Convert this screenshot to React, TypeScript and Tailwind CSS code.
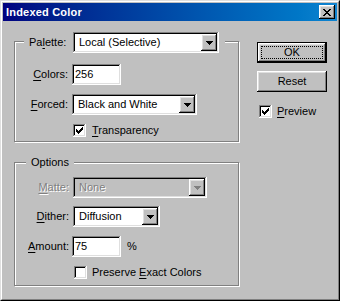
import React from "react";

const raised =
  "shadow-[inset_-1px_-1px_0_#000,inset_1px_1px_0_#fff,inset_-2px_-2px_0_#808080,inset_2px_2px_0_#dfdfdf]";
const sunken =
  "shadow-[inset_-1px_-1px_0_#fff,inset_1px_1px_0_#808080,inset_-2px_-2px_0_#dfdfdf,inset_2px_2px_0_#000]";
const etched = "border border-[#808080] shadow-[inset_1px_1px_0_#fff,1px_1px_0_#fff]";

function U({ children }: { children: React.ReactNode }) {
  return <span className="underline decoration-1 underline-offset-[2px]">{children}</span>;
}

function Arrow({ color = "#000" }: { color?: string }) {
  return (
    <svg width="7" height="4" viewBox="0 0 7 4" shapeRendering="crispEdges">
      <rect x="0" y="0" width="7" height="1" fill={color} />
      <rect x="1" y="1" width="5" height="1" fill={color} />
      <rect x="2" y="2" width="3" height="1" fill={color} />
      <rect x="3" y="3" width="1" height="1" fill={color} />
    </svg>
  );
}

function Combo({
  text,
  width,
  disabled = false,
}: {
  text: string;
  width: string;
  disabled?: boolean;
}) {
  return (
    <div
      className={`${width} h-[21px] flex items-center p-[2px] ${sunken} ${
        disabled ? "bg-[#c0c0c0]" : "bg-white"
      }`}
    >
      <div
        className={`flex-1 pl-[4px] leading-none ${
          disabled ? "text-[#808080] [text-shadow:1px_1px_0_#fff]" : "text-black"
        }`}
      >
        {text}
      </div>
      <div className={`w-[16px] h-[17px] bg-[#c0c0c0] flex items-center justify-center ${raised}`}>
        <div className="mt-[1px]">
          {disabled ? <Arrow color="#808080" /> : <Arrow />}
        </div>
      </div>
    </div>
  );
}

function Check({ checked }: { checked: boolean }) {
  return (
    <div className={`w-[13px] h-[13px] bg-white flex items-center justify-center ${sunken}`}>
      {checked && (
        <svg width="7" height="7" viewBox="0 0 7 7" shapeRendering="crispEdges">
          <rect x="6" y="0" width="1" height="1" fill="#000" />
          <rect x="5" y="1" width="2" height="1" fill="#000" />
          <rect x="0" y="2" width="1" height="1" fill="#000" />
          <rect x="4" y="2" width="3" height="1" fill="#000" />
          <rect x="0" y="3" width="2" height="1" fill="#000" />
          <rect x="3" y="3" width="3" height="1" fill="#000" />
          <rect x="0" y="4" width="5" height="1" fill="#000" />
          <rect x="1" y="5" width="3" height="1" fill="#000" />
          <rect x="2" y="6" width="1" height="1" fill="#000" />
        </svg>
      )}
    </div>
  );
}

function CloseGlyph() {
  const rows: [number, number, number][] = [
    [0, 0, 2], [0, 6, 2],
    [1, 1, 2], [1, 5, 2],
    [2, 2, 4],
    [3, 3, 2],
    [4, 2, 4],
    [5, 1, 2], [5, 5, 2],
    [6, 0, 2], [6, 6, 2],
  ];
  return (
    <svg width="8" height="7" viewBox="0 0 8 7" shapeRendering="crispEdges">
      {rows.map(([y, x, w], i) => (
        <rect key={i} x={x} y={y} width={w} height="1" fill="#000" />
      ))}
    </svg>
  );
}

export default function App() {
  return (
    <div
      className="w-[340px] h-[301px] bg-[#c0c0c0] border border-[#dfdfdf] border-r-black border-b-black text-[11px] text-black"
      style={{ fontFamily: '"Liberation Sans", Arial, sans-serif' }}
    >
      <div className="w-full h-full border border-white border-r-[#808080] border-b-[#808080] p-[1px] flex flex-col">
        {/* Title bar */}
        <div className="h-[18px] flex items-center bg-linear-to-r from-[#000080] to-[#1084d0] pl-[3px] pr-[2px]">
          <div className="flex-1 text-white font-bold text-[11px] leading-none tracking-[0.2px]">
            Indexed Color
          </div>
          <div className={`w-[16px] h-[14px] bg-[#c0c0c0] flex items-center justify-center ${raised}`}>
            <CloseGlyph />
          </div>
        </div>

        {/* Body */}
        <div className="flex flex-row pl-[11px]">
          {/* Left column */}
          <div className="w-[226px] pt-[20px] flex flex-col">
            {/* Palette group */}
            <div className={`w-[225px] ${etched} flex flex-col pb-[4px]`}>
              <div className="-mt-[10px] ml-[9px] self-start flex items-center bg-[#c0c0c0] pl-[5px] pr-[6px] h-[21px]">
                <span className="w-[44px] leading-none">
                  Pa<U>l</U>ette:
                </span>
                <Combo text="Local (Selective)" width="w-[146px]" />
              </div>
              <div className="mt-[11px] flex items-center h-[21px]">
                <div className="w-[53px] text-right leading-none">
                  <U>C</U>olors:
                </div>
                <div className={`ml-[4px] w-[49px] h-[21px] bg-white pl-[3px] flex items-center leading-none ${sunken}`}>
                  256
                </div>
              </div>
              <div className="mt-[9px] flex items-center h-[21px]">
                <div className="w-[53px] text-right leading-none">
                  <U>F</U>orced:
                </div>
                <div className="ml-[4px]">
                  <Combo text="Black and White" width="w-[125px]" />
                </div>
              </div>
              <div className="mt-[9px] flex items-center h-[13px] pl-[58px]">
                <Check checked />
                <span className="ml-[6px] leading-none">
                  <U>T</U>ransparency
                </span>
              </div>
            </div>

            {/* Options group */}
            <div className={`mt-[20px] w-[225px] ${etched} flex flex-col pb-[6px]`}>
              <div className="-mt-[7px] ml-[11px] self-start bg-[#c0c0c0] px-[5px] h-[13px] leading-[13px]">
                Options
              </div>
              <div className="mt-[8px] flex items-center h-[21px]">
                <div className="w-[54px] text-right leading-none text-[#808080] [text-shadow:1px_1px_0_#fff]">
                  <U>M</U>atte:
                </div>
                <div className="ml-[4px]">
                  <Combo text="None" width="w-[134px]" disabled />
                </div>
              </div>
              <div className="mt-[8px] flex items-center h-[21px]">
                <div className="w-[54px] text-right leading-none">
                  <U>D</U>ither:
                </div>
                <div className="ml-[4px]">
                  <Combo text="Diffusion" width="w-[87px]" />
                </div>
              </div>
              <div className="mt-[9px] flex items-center h-[21px]">
                <div className="w-[54px] text-right leading-none">
                  <U>A</U>mount:
                </div>
                <div className={`ml-[3px] w-[49px] h-[21px] bg-white pl-[3px] flex items-center leading-none ${sunken}`}>
                  75
                </div>
                <span className="ml-[6px] leading-none">%</span>
              </div>
              <div className="mt-[9px] flex items-center h-[13px] pl-[59px]">
                <Check checked={false} />
                <span className="ml-[5px] leading-none">
                  Preserve <U>E</U>xact Colors
                </span>
              </div>
            </div>
          </div>

          {/* Right column */}
          <div className="ml-[17px] pt-[21px] flex flex-col">
            <div className="w-[70px] h-[21px] border border-black bg-[#c0c0c0]">
              <div className={`w-full h-full p-[3px] ${raised}`}>
                <div className="w-full h-full border border-dotted border-black flex items-center justify-center leading-none">
                  OK
                </div>
              </div>
            </div>
            <div className={`mt-[8px] w-[70px] h-[21px] bg-[#c0c0c0] flex items-center justify-center leading-none ${raised}`}>
              Reset
            </div>
            <div className="mt-[13px] flex items-center h-[13px] pl-[2px]">
              <Check checked />
              <span className="ml-[5px] leading-none">
                <U>P</U>review
              </span>
            </div>
          </div>
        </div>
      </div>
    </div>
  );
}
